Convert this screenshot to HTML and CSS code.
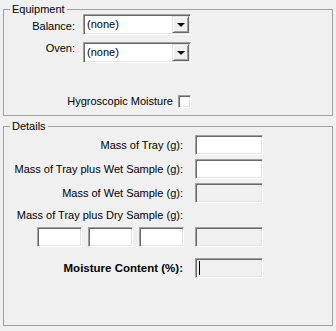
FILE: index.html
```html
<!DOCTYPE html>
<html lang="en">
<head>
    <meta charset="UTF-8">
    <title>Moisture Content</title>
    <link rel="stylesheet" href="styles.css">
</head>
<body>
    <fieldset class="group equipment">
        <legend>Equipment</legend>
        <div class="equip-grid">
            <label class="lbl lbl-balance">Balance:</label>
            <div class="combo">
                <span class="combo-text">(none)</span>
                <span class="combo-btn"><span class="arrow"></span></span>
            </div>

            <label class="lbl lbl-oven">Oven:</label>
            <div class="combo">
                <span class="combo-text">(none)</span>
                <span class="combo-btn"><span class="arrow"></span></span>
            </div>

            <div class="check-row">
                <span>Hygroscopic Moisture</span>
                <span class="checkbox"></span>
            </div>
        </div>
    </fieldset>

    <fieldset class="group details">
        <legend>Details</legend>
        <div class="details-grid">
            <label class="lbl">Mass of Tray (g):</label>
            <span class="field"></span>

            <label class="lbl">Mass of Tray plus Wet Sample (g):</label>
            <span class="field"></span>

            <label class="lbl">Mass of Wet Sample (g):</label>
            <span class="field disabled"></span>

            <label class="lbl dry-label">Mass of Tray plus Dry Sample (g):</label>

            <div class="dry-row">
                <span class="field small"></span>
                <span class="field small"></span>
                <span class="field small"></span>
                <span class="field disabled total"></span>
            </div>

            <label class="lbl bold">Moisture Content (%):</label>
            <span class="field disabled"><span class="caret"></span></span>
        </div>
    </fieldset>
</body>
</html>
```

FILE: styles.css
```css
body {
    margin: 0;
    padding: 3px;
    background: #f0f0f0;
    color: #000;
    font-family: "Liberation Sans", Arial, sans-serif;
    font-size: 11px;
    line-height: 13px;
}

.group {
    margin: 0;
    padding: 0;
    border: 1px solid #a0a0a0;
    min-width: 0;
}

.group legend {
    margin-left: 6px;
    padding: 0 2px;
    line-height: 13px;
}

.details {
    margin-top: 4px;
    padding-bottom: 47px;
}

/* equipment box */
.equip-grid {
    display: grid;
    grid-template-columns: 71px 108px;
    column-gap: 8px;
    row-gap: 7px;
    margin-top: -2px;
    padding-bottom: 7px;
}

.lbl {
    text-align: right;
    white-space: nowrap;
}

.lbl-balance {
    padding-top: 6px;
}

.lbl-oven {
    padding-top: 0;
}

.combo {
    position: relative;
    display: flex;
    align-items: center;
    height: 21px;
    box-sizing: border-box;
    background: #fff;
    border: 1px solid;
    border-color: #a0a0a0 #fff #fff #a0a0a0;
    box-shadow: inset 1px 1px 0 #696969, inset -1px -1px 0 #e3e3e3;
}

.combo-text {
    padding-left: 3px;
    flex: 1;
}

.combo-btn {
    width: 17px;
    height: 17px;
    box-sizing: border-box;
    margin-right: 1px;
    background: #f0f0f0;
    border: 1px solid;
    border-color: #e3e3e3 #696969 #696969 #e3e3e3;
    box-shadow: inset 1px 1px 0 #fff, inset -1px -1px 0 #a0a0a0;
    display: flex;
    align-items: center;
    justify-content: center;
}

.arrow {
    width: 0;
    height: 0;
    border-left: 4px solid transparent;
    border-right: 4px solid transparent;
    border-top: 4px solid #000;
    margin-top: 1px;
}

.check-row {
    grid-column: 1 / 3;
    justify-self: end;
    display: flex;
    align-items: center;
    gap: 5px;
    margin-top: 25px;
}

.checkbox {
    width: 13px;
    height: 13px;
    box-sizing: border-box;
    background: #fff;
    border: 1px solid;
    border-color: #a0a0a0 #fff #fff #a0a0a0;
    box-shadow: inset 1px 1px 0 #696969, inset -1px -1px 0 #e3e3e3;
}

/* details box */
.details-grid {
    display: grid;
    grid-template-columns: 179px 68px;
    column-gap: 12px;
    row-gap: 4px;
    align-items: center;
    margin-top: 2px;
}

.field {
    display: block;
    position: relative;
    height: 20px;
    box-sizing: border-box;
    background: #fff;
    border: 1px solid;
    border-color: #a0a0a0 #fff #fff #a0a0a0;
    box-shadow: inset 1px 1px 0 #696969, inset -1px -1px 0 #e3e3e3;
}

.field.disabled {
    background: #f0f0f0;
}

.dry-label {
    grid-column: 1;
    margin-top: 2px;
}

.dry-row {
    grid-column: 1 / 3;
    display: flex;
    gap: 6px;
    padding-left: 33px;
    margin-top: 1px;
}

.field.small {
    width: 45px;
}

.field.total {
    width: 68px;
    margin-left: 5px;
}

.bold {
    font-weight: bold;
    font-size: 11.5px;
    margin-top: 7px;
}

.bold + .field {
    margin-top: 7px;
}

.caret {
    position: absolute;
    left: 3px;
    top: 2px;
    width: 1px;
    height: 14px;
    background: #000;
}
```
